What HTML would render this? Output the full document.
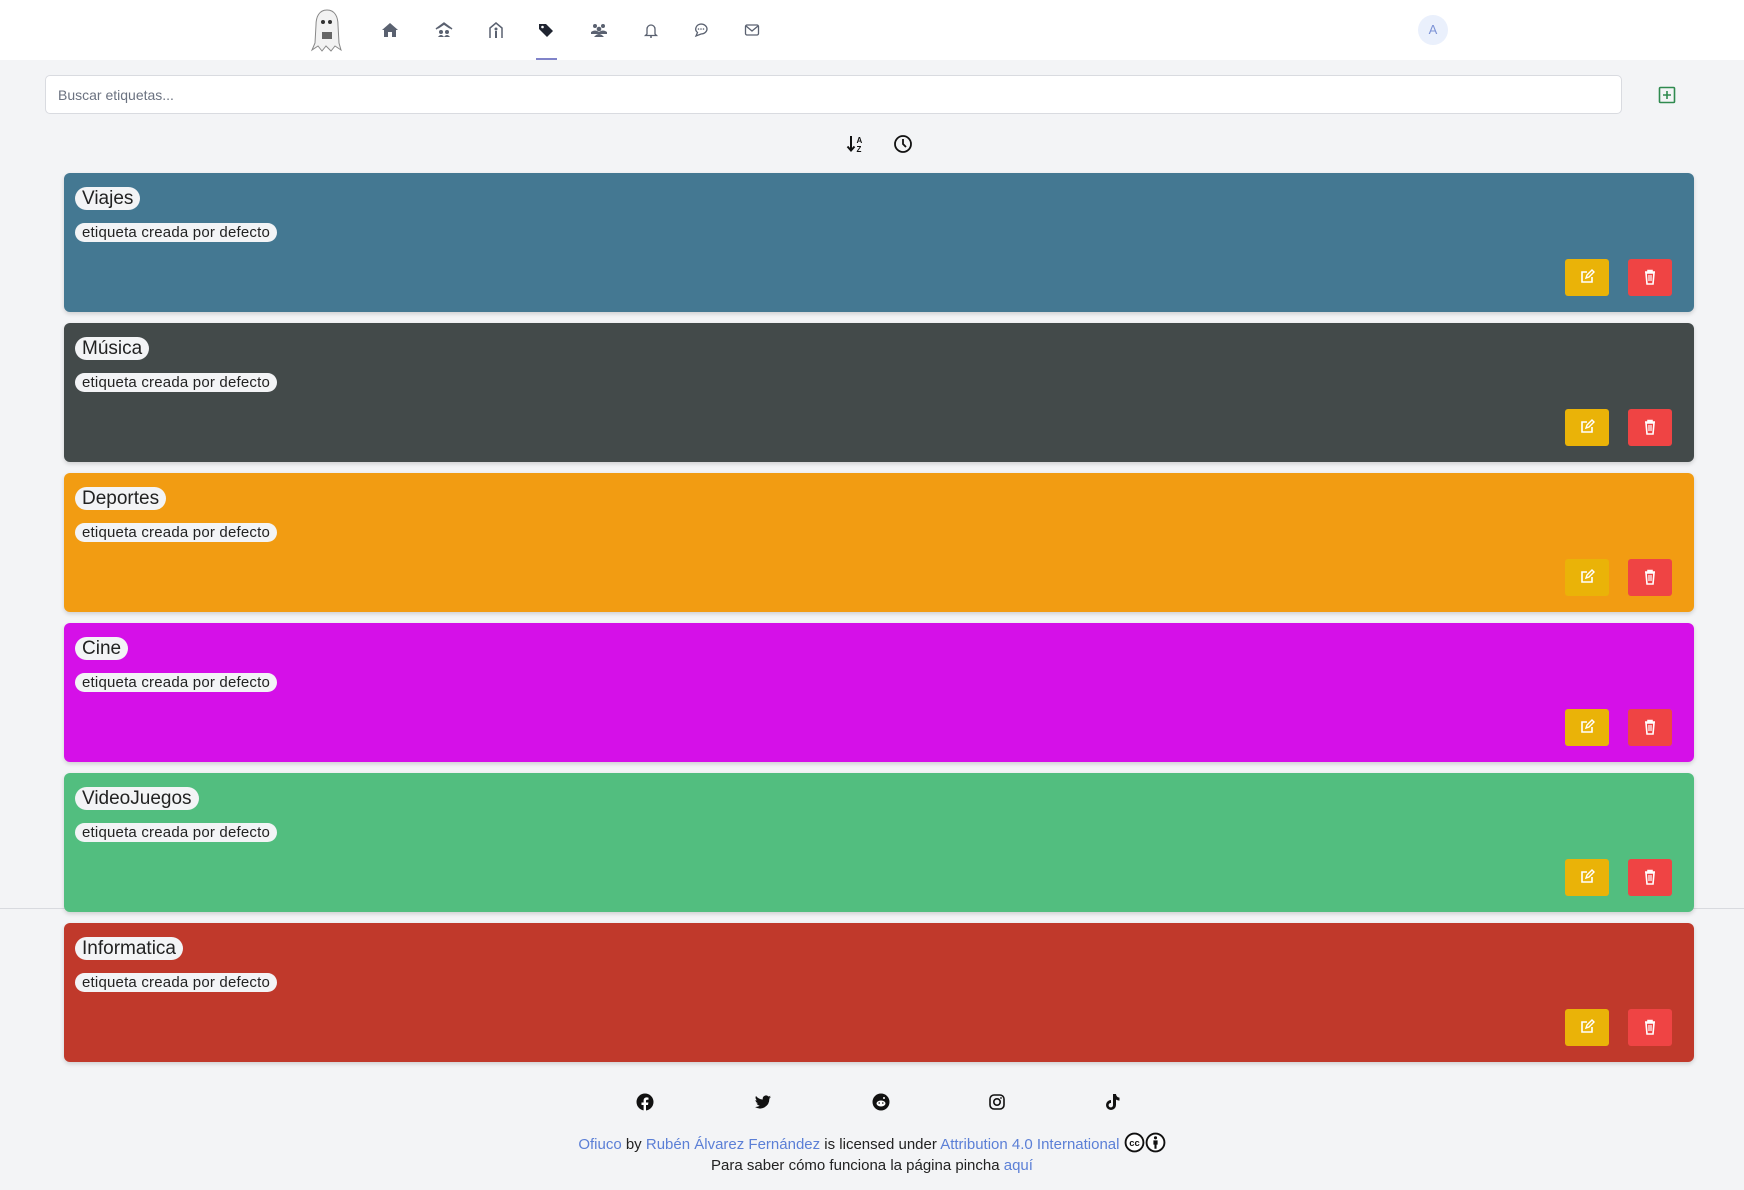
<!DOCTYPE html>
<html><head><meta charset="utf-8">
<style>
*{box-sizing:border-box;margin:0;padding:0}
html,body{width:1744px;height:1190px;overflow:hidden}
body{background:#f3f4f6;font-family:"Liberation Sans",sans-serif;position:relative}
.hdr{position:absolute;left:0;top:0;width:1744px;height:60px;background:#fff}
.ni{position:absolute;top:21px;width:18px;height:18px}
.ul{position:absolute;left:536px;top:58px;width:21px;height:2px;background:#8083c9}
.av{position:absolute;left:1418px;top:15px;width:30px;height:30px;border-radius:50%;background:#eaf0fc;color:#7d93d6;font-size:13px;text-align:center;line-height:30px}
.search{position:absolute;left:45px;top:75px;width:1577px;height:39px;background:#fff;border:1px solid #d9dbe0;border-radius:5px;font-size:14px;color:#6b7280;padding:11px 12px}
.line{position:absolute;left:0;top:908px;width:1744px;height:1px;background:#d8dadf}
.card{position:absolute;left:64px;width:1630px;height:139px;border-radius:6px;box-shadow:0 2px 4px rgba(0,0,0,.15)}
.t{position:absolute;left:11px;top:14px;background:#f3f4f6;border-radius:12px;font-size:19px;color:#222;padding:1px 7px;height:23px;line-height:21px}
.s{position:absolute;left:11px;top:50px;background:#f3f4f6;border-radius:10px;font-size:15px;color:#222;padding:0 7px;height:19px;line-height:19px;letter-spacing:.2px}
.be{position:absolute;left:1501px;top:86px;width:44px;height:37px;background:#eab308;border-radius:3px}
.bd{position:absolute;left:1564px;top:86px;width:44px;height:37px;background:#ef4444;border-radius:3px}
.be svg,.bd svg{position:absolute;left:14px;top:10px}
.ft{position:absolute;top:1093px;width:18px;height:18px}
.lic{position:absolute;left:0;width:1744px;text-align:center;font-size:15px;color:#222}
.lic a{color:#5b7fd6;text-decoration:none}
</style></head><body>
<div class="hdr">
<svg style="position:absolute;left:309px;top:8px" width="36" height="45" viewBox="0 0 36 45"><path d="M18 2C10 2 7 9 7 17L6 35L3 42L9 38L13 43L17 38L22 43L26 38L32 42L30 35L29 17C29 9 26 2 18 2Z" fill="#f2f2f2" stroke="#888" stroke-width="1"/><circle cx="14" cy="14" r="2" fill="#333"/><circle cx="21" cy="14" r="2" fill="#333"/><rect x="13" y="24" width="10" height="7" fill="#666"/></svg>
<svg class="ni" style="left:381px" viewBox="0 0 18 18"><path d="M9 2L1 9h2v7h4v-5h4v5h4V9h2z" fill="#5a6170"/></svg>
<svg class="ni" style="left:435px" viewBox="0 0 18 18"><path d="M1 8L9 2l8 6M3 7l6-4 6 4" fill="none" stroke="#5a6170" stroke-width="1.5"/><circle cx="6" cy="11" r="2" fill="#5a6170"/><circle cx="12" cy="11" r="2" fill="#5a6170"/><path d="M3 16q3-4 6 0q3-4 6 0z" fill="#5a6170"/></svg>
<svg class="ni" style="left:487px" viewBox="0 0 18 18"><path d="M3 17V7l6-5 6 5v10" fill="none" stroke="#5a6170" stroke-width="1.5"/><circle cx="9" cy="8" r="1.5" fill="#5a6170"/><path d="M8 10h2v7H8z" fill="#5a6170"/></svg>
<svg class="ni" style="left:537px" viewBox="0 0 18 18"><path d="M2 3h7l7 7-6 6-8-8z" fill="#1f2430"/><circle cx="5.5" cy="6" r="1.3" fill="#fff"/></svg>
<svg class="ni" style="left:590px" viewBox="0 0 18 18"><circle cx="5" cy="5" r="2" fill="#5a6170"/><circle cx="13" cy="5" r="2" fill="#5a6170"/><circle cx="9" cy="8" r="2.3" fill="#5a6170"/><path d="M1 11q4-3 8 0q4-3 8 0v2H1zM4 16q5-6 10 0z" fill="#5a6170"/></svg>
<svg class="ni" style="left:642px" viewBox="0 0 18 18"><path d="M5 13V8a4 4 0 018 0v5l1.5 1.5h-11z" fill="none" stroke="#5a6170" stroke-width="1.3"/><circle cx="9" cy="16" r="1" fill="#5a6170"/></svg>
<svg class="ni" style="left:692px" viewBox="0 0 18 18"><path d="M9 3a6 5 0 110 10l-5 2 1.5-3.5A6 5 0 019 3z" fill="none" stroke="#5a6170" stroke-width="1.3"/><circle cx="6.5" cy="8" r=".8" fill="#5a6170"/><circle cx="9" cy="8" r=".8" fill="#5a6170"/><circle cx="11.5" cy="8" r=".8" fill="#5a6170"/></svg>
<svg class="ni" style="left:743px" viewBox="0 0 18 18"><rect x="2.5" y="4" width="13" height="10" rx="1.5" fill="none" stroke="#5a6170" stroke-width="1.3"/><path d="M3 5l6 5 6-5" fill="none" stroke="#5a6170" stroke-width="1.3"/></svg>
<div class="ul"></div>
<div class="av">A</div>
</div>
<div class="search">Buscar etiquetas...</div>
<svg style="position:absolute;left:1658px;top:86px" width="18" height="18" viewBox="0 0 18 18"><rect x="1.5" y="1.5" width="15" height="15" rx="1" fill="none" stroke="#2f8a4f" stroke-width="1.6"/><path d="M9 5v8M5 9h8" stroke="#2f8a4f" stroke-width="1.6"/></svg>
<svg style="position:absolute;left:846px;top:134px" width="20" height="20" viewBox="0 0 20 20"><path d="M5 2v14M1.5 12.5L5 16.5l3.5-4" fill="none" stroke="#111" stroke-width="2"/><text x="10.5" y="9" font-size="8" font-weight="bold" font-family="Liberation Sans" fill="#111">A</text><text x="10.5" y="18" font-size="8" font-weight="bold" font-family="Liberation Sans" fill="#111">Z</text></svg>
<svg style="position:absolute;left:893px;top:134px" width="20" height="20" viewBox="0 0 20 20"><circle cx="10" cy="10" r="8" fill="none" stroke="#111" stroke-width="1.8"/><path d="M10 5v5l3 3" fill="none" stroke="#111" stroke-width="1.8"/></svg>
<div class="line"></div>

<div class="card" style="top:173px;background:#447892"><span class="t">Viajes</span><span class="s">etiqueta creada por defecto</span><div class="be"><svg width="16" height="16" viewBox="0 0 16 16"><path d="M8 3H3v10h10V8" fill="none" stroke="#fff" stroke-width="1.6"/><path d="M7 9l1-3 5-5 2 2-5 5z" fill="none" stroke="#fff" stroke-width="1.4"/></svg></div><div class="bd"><svg width="16" height="16" viewBox="0 0 16 16"><path d="M3 3h10M6 3V1.5h4V3M4 4l1 11h6l1-11z" fill="none" stroke="#fff" stroke-width="1.6"/><path d="M7 6v6M9 6v6" stroke="#fff" stroke-width="1.2"/></svg></div></div>
<div class="card" style="top:323px;background:#434a4a"><span class="t">Música</span><span class="s">etiqueta creada por defecto</span><div class="be"><svg width="16" height="16" viewBox="0 0 16 16"><path d="M8 3H3v10h10V8" fill="none" stroke="#fff" stroke-width="1.6"/><path d="M7 9l1-3 5-5 2 2-5 5z" fill="none" stroke="#fff" stroke-width="1.4"/></svg></div><div class="bd"><svg width="16" height="16" viewBox="0 0 16 16"><path d="M3 3h10M6 3V1.5h4V3M4 4l1 11h6l1-11z" fill="none" stroke="#fff" stroke-width="1.6"/><path d="M7 6v6M9 6v6" stroke="#fff" stroke-width="1.2"/></svg></div></div>
<div class="card" style="top:473px;background:#f29c12"><span class="t">Deportes</span><span class="s">etiqueta creada por defecto</span><div class="be"><svg width="16" height="16" viewBox="0 0 16 16"><path d="M8 3H3v10h10V8" fill="none" stroke="#fff" stroke-width="1.6"/><path d="M7 9l1-3 5-5 2 2-5 5z" fill="none" stroke="#fff" stroke-width="1.4"/></svg></div><div class="bd"><svg width="16" height="16" viewBox="0 0 16 16"><path d="M3 3h10M6 3V1.5h4V3M4 4l1 11h6l1-11z" fill="none" stroke="#fff" stroke-width="1.6"/><path d="M7 6v6M9 6v6" stroke="#fff" stroke-width="1.2"/></svg></div></div>
<div class="card" style="top:623px;background:#d510e8"><span class="t">Cine</span><span class="s">etiqueta creada por defecto</span><div class="be"><svg width="16" height="16" viewBox="0 0 16 16"><path d="M8 3H3v10h10V8" fill="none" stroke="#fff" stroke-width="1.6"/><path d="M7 9l1-3 5-5 2 2-5 5z" fill="none" stroke="#fff" stroke-width="1.4"/></svg></div><div class="bd"><svg width="16" height="16" viewBox="0 0 16 16"><path d="M3 3h10M6 3V1.5h4V3M4 4l1 11h6l1-11z" fill="none" stroke="#fff" stroke-width="1.6"/><path d="M7 6v6M9 6v6" stroke="#fff" stroke-width="1.2"/></svg></div></div>
<div class="card" style="top:773px;background:#52be7f"><span class="t">VideoJuegos</span><span class="s">etiqueta creada por defecto</span><div class="be"><svg width="16" height="16" viewBox="0 0 16 16"><path d="M8 3H3v10h10V8" fill="none" stroke="#fff" stroke-width="1.6"/><path d="M7 9l1-3 5-5 2 2-5 5z" fill="none" stroke="#fff" stroke-width="1.4"/></svg></div><div class="bd"><svg width="16" height="16" viewBox="0 0 16 16"><path d="M3 3h10M6 3V1.5h4V3M4 4l1 11h6l1-11z" fill="none" stroke="#fff" stroke-width="1.6"/><path d="M7 6v6M9 6v6" stroke="#fff" stroke-width="1.2"/></svg></div></div>
<div class="card" style="top:923px;background:#c0392b"><span class="t">Informatica</span><span class="s">etiqueta creada por defecto</span><div class="be"><svg width="16" height="16" viewBox="0 0 16 16"><path d="M8 3H3v10h10V8" fill="none" stroke="#fff" stroke-width="1.6"/><path d="M7 9l1-3 5-5 2 2-5 5z" fill="none" stroke="#fff" stroke-width="1.4"/></svg></div><div class="bd"><svg width="16" height="16" viewBox="0 0 16 16"><path d="M3 3h10M6 3V1.5h4V3M4 4l1 11h6l1-11z" fill="none" stroke="#fff" stroke-width="1.6"/><path d="M7 6v6M9 6v6" stroke="#fff" stroke-width="1.2"/></svg></div></div>

<svg class="ft" style="left:636px" viewBox="0 0 18 18"><circle cx="9" cy="9" r="8.5" fill="#111"/><path d="M10 18v-6h2l.4-2.5H10V8c0-.7.3-1.2 1.3-1.2h1.2V4.6C12 4.5 11.3 4.4 10.7 4.4 8.8 4.4 7.6 5.5 7.6 7.6v1.9H5.5V12h2.1v6z" fill="#fff"/></svg>
<svg class="ft" style="left:754px" viewBox="0 0 18 18"><path d="M17 4c-.6.3-1.2.4-1.900.5.7-.4 1.200-1 1.400-1.8-.6.4-1.300.6-2.100.8A3.300 3.300 0 008.800 6.500 9.300 9.300 0 012 3a3.300 3.300 0 001 4.400c-.5 0-1-.2-1.500-.4 0 1.600 1.100 2.900 2.600 3.200-.5.1-1 .2-1.500.1.4 1.300 1.600 2.300 3.100 2.300A6.600 6.600 0 011 14a9.300 9.300 0 0014.300-8.300c.7-.5 1.200-1 1.700-1.700z" fill="#111"/></svg>
<svg class="ft" style="left:872px" viewBox="0 0 18 18"><circle cx="9" cy="9" r="8.5" fill="#111"/><ellipse cx="9" cy="10.5" rx="4.5" ry="3" fill="#fff"/><circle cx="7.2" cy="10" r=".8" fill="#111"/><circle cx="10.8" cy="10" r=".8" fill="#111"/><circle cx="12" cy="5" r="1" fill="#fff"/></svg>
<svg class="ft" style="left:988px" viewBox="0 0 18 18"><rect x="2" y="2" width="14" height="14" rx="4" fill="none" stroke="#111" stroke-width="1.6"/><circle cx="9" cy="9" r="3.2" fill="none" stroke="#111" stroke-width="1.6"/><circle cx="13" cy="5" r=".9" fill="#111"/></svg>
<svg class="ft" style="left:1104px" viewBox="0 0 18 18"><path d="M9 1h3c.2 2 1.5 3.5 3.5 3.6v3c-1.3 0-2.5-.4-3.5-1.1v5.5A5 5 0 117 7v3a2.2 2.2 0 102 2.1z" fill="#111"/></svg>
<div class="lic" style="top:1132px"><a>Ofiuco</a> by <a>Rubén Álvarez Fernández</a> is licensed under <a>Attribution 4.0 International</a> <svg style="vertical-align:-4px" width="21" height="21" viewBox="0 0 20 20"><circle cx="10" cy="10" r="8.5" fill="#fff" stroke="#111" stroke-width="1.8"/><text x="10" y="13.5" font-size="9" font-weight="bold" text-anchor="middle" font-family="Liberation Sans" fill="#111">cc</text></svg><svg style="vertical-align:-4px" width="21" height="21" viewBox="0 0 20 20"><circle cx="10" cy="10" r="8.5" fill="#fff" stroke="#111" stroke-width="1.8"/><circle cx="10" cy="5.5" r="1.5" fill="#111"/><path d="M8 8h4v4h-1v4H9v-4H8z" fill="#111"/></svg></div>
<div class="lic" style="top:1157px">Para saber cómo funciona la página pincha <a>aquí</a></div>
</body></html>
